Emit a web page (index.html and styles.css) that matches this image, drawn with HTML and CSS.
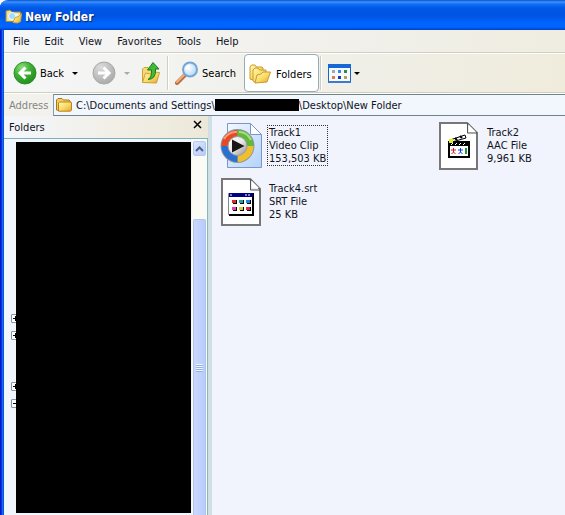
FILE: index.html
```html
<!DOCTYPE html>
<html lang="en">
<head>
<meta charset="utf-8">
<title>New Folder</title>
<link rel="stylesheet" href="styles.css">
</head>
<body>
<svg width="0" height="0" class="defs" aria-hidden="true">
  <defs>
    <linearGradient id="gold" x1="0" y1="0" x2="1" y2="1"><stop offset="0" stop-color="#fff9b8"/><stop offset=".5" stop-color="#fbdc68"/><stop offset="1" stop-color="#e3a62d"/></linearGradient>
    <radialGradient id="green" cx=".35" cy=".25" r=".8"><stop offset="0" stop-color="#8ce07a"/><stop offset=".5" stop-color="#3fae35"/><stop offset="1" stop-color="#1d8d1b"/></radialGradient>
    <radialGradient id="grey" cx=".35" cy=".25" r=".8"><stop offset="0" stop-color="#dcdcdc"/><stop offset="1" stop-color="#a9a9a9"/></radialGradient>
    <radialGradient id="glass" cx=".4" cy=".4" r=".7"><stop offset="0" stop-color="#ffffff"/><stop offset="1" stop-color="#a5d3f7"/></radialGradient>
    <linearGradient id="sheet" x1="0" y1="0" x2="1" y2="1"><stop offset="0" stop-color="#f2f8ff"/><stop offset="1" stop-color="#b4d2fa"/></linearGradient>
    <linearGradient id="disc" x1="0" y1="0" x2="1" y2="1"><stop offset="0" stop-color="#ffffff"/><stop offset=".5" stop-color="#e8e8e8"/><stop offset="1" stop-color="#8b8b8b"/></linearGradient>
    <symbol id="folder" viewBox="0 0 16 14">
      <path d="M.5 12V2L2 .5h4L7.500 2H13l1 1v9.500H2z" fill="#f4cd5e" stroke="#a87918"/>
      <path d="M2.500 13.200V5l1-1H15l.5 1v7l-1 1.200z" fill="url(#gold)" stroke="#b8851e"/>
    </symbol>
  </defs>
</svg>
<div class="window">
  <header class="titlebar">
    <svg class="title-icon" width="17" height="15" viewBox="0 0 17 15" aria-hidden="true">
      <path d="M1 12.500V2l4-1 2 2h8.500v9.500z" fill="#f5df8e" stroke="#9b8549"/>
      <path d="M4 4.500h9V11H4z" fill="#eaf6fb"/>
      <circle cx="7" cy="7" r="3.500" fill="#a5dcf7" stroke="#edfaff"/>
      <path d="m8 13.500 2-5 4-1 2.500-3-1 8-3 1.500z" fill="url(#gold)" stroke="#c5a33e"/>
    </svg>
    <h1>New Folder</h1>
  </header>
  <nav class="menubar" aria-label="Menu">
    <button type="button">File</button><button type="button">Edit</button><button type="button">View</button><button type="button">Favorites</button><button type="button">Tools</button><button type="button">Help</button>
  </nav>
  <div class="toolbar" role="toolbar" aria-label="Standard buttons">
    <button class="tool back" type="button">
      <svg width="24" height="24" viewBox="0 0 24 24" aria-hidden="true"><circle cx="12" cy="12" r="11" fill="url(#green)" stroke="#2f8f2b"/><path d="M18 12H7m5.500-5.500L7 12l5.500 5.500" fill="none" stroke="#fff" stroke-width="3"/></svg>
      <span>Back</span>
      <i class="caret"></i>
    </button>
    <button class="tool forward" type="button" aria-label="Forward" disabled>
      <svg width="24" height="24" viewBox="0 0 24 24" aria-hidden="true"><circle cx="12" cy="12" r="11" fill="url(#grey)" stroke="#a9a9a9"/><path d="M6 12h11m-5.500-5.500L17 12l-5.500 5.500" fill="none" stroke="#fff" stroke-width="3"/></svg>
      <i class="caret"></i>
    </button>
    <button class="tool" type="button" aria-label="Up">
      <svg width="20" height="24" viewBox="0 0 20 24" aria-hidden="true">
        <path d="M1.500 21V8L3 6.500h4L8 8h6v13z" fill="#f7d976" stroke="#d0a23c"/>
        <path d="m1.500 21.500 3-9.500 5 1 2-2 7 .5-3 10.500z" fill="url(#gold)" stroke="#d0a03a"/>
        <path d="M7 18.500q4-2 3.500-9.500H6.500L12 1.500 18 8h-3.500q1 10-7.500 10.500z" fill="#42b938" stroke="#1c7b1b"/>
      </svg>
    </button>
    <span class="divider"></span>
    <button class="tool search" type="button">
      <svg width="24" height="24" viewBox="0 0 24 24" aria-hidden="true"><path d="m2 22 8-8" stroke="#b66e46" stroke-width="4" stroke-linecap="round"/><path d="m2 21 7-7" stroke="#f5ad79" stroke-width="2" stroke-linecap="round"/><circle cx="15" cy="8.500" r="7" fill="url(#glass)" stroke="#78a5d6" stroke-width="2"/><path d="M11 8q1-3 4-3" fill="none" stroke="#fff" stroke-width="2"/></svg>
      <span>Search</span>
    </button>
    <button class="tool pressed" type="button" aria-pressed="true">
      <svg width="22" height="20" viewBox="0 0 22 20" aria-hidden="true">
        <path d="M1 15V3l1.500-2H6l1.500 2H13l1 1v4L4 16z" fill="url(#gold)" stroke="#c99a2c"/>
        <path d="M4 17V6l2-2h3l1.500 2H17v5L7 19z" fill="url(#gold)" stroke="#c99a2c"/>
        <path d="m6 19 2-8 4-1 2-2h7.500L18 18z" fill="url(#gold)" stroke="#c99a2c"/>
      </svg>
      <span>Folders</span>
    </button>
    <span class="divider"></span>
    <button class="tool views" type="button" aria-label="Views">
      <svg width="23" height="19" viewBox="0 0 23 19" aria-hidden="true"><path d="M.5.5h22v18H.5z" fill="#f6faff" stroke="#1c65c5"/><path d="M0 0h23v4H0z" fill="#1767d5"/><path d="M0 17h23v2H0z" fill="#3a7bcf"/><path d="M4 6h3v3H4z" fill="#9ba7c7"/><path d="M10 6h3v3h-3z" fill="#3c86df"/><path d="M16 6h3v3h-3z" fill="#249444"/><path d="M4 12h3v3H4z" fill="#e77945"/><path d="M10 12h3v3h-3z" fill="#143cb7"/><path d="M16 12h3v3h-3z" fill="#b5a152"/></svg>
      <i class="caret"></i>
    </button>
  </div>
  <div class="address">
    <span class="address-label">Address</span>
    <div class="address-box">
      <svg width="16" height="14" aria-hidden="true"><use href="#folder"/></svg>
      <span class="path">C:\Documents and Settings\</span><span class="masked"></span><span class="path">\Desktop\New Folder</span>
    </div>
  </div>
  <div class="body">
    <aside class="sidebar">
      <div class="side-head">
        <h2>Folders</h2>
        <button type="button" aria-label="Close"><svg width="9" height="9" viewBox="0 0 9 9" aria-hidden="true"><path d="m1 1 7 7M8 1 1 8" stroke="#000" stroke-width="1.500"/></svg></button>
      </div>
      <div class="side-body">
        <div class="toggles">
          <button class="toggle row-11" type="button" aria-label="Expand"></button>
          <button class="toggle row-12" type="button" aria-label="Expand"></button>
          <button class="toggle row-15" type="button" aria-label="Expand"></button>
          <button class="toggle open row-16" type="button" aria-label="Collapse"></button>
        </div>
        <div class="tree-mask"></div>
        <div class="scrollbar">
          <button type="button" aria-label="Scroll up"><svg width="9" height="6" viewBox="0 0 9 6" aria-hidden="true"><path d="m1 5 3.500-3.500L8 5" fill="none" stroke="#4d6185" stroke-width="2"/></svg></button>
          <div class="thumb"><span class="grip"></span></div>
        </div>
      </div>
    </aside>
    <main class="files">
      <article class="file">
        <svg width="42" height="48" viewBox="0 0 42 48" aria-hidden="true">
          <path d="M7.500 1.500h23l11 11v33h-34z" fill="url(#sheet)" stroke="#7898cd"/>
          <path d="M30.500 1.500v11h11z" fill="#fff" stroke="#7898cd"/>
          <circle cx="17.500" cy="24" r="17" fill="#8b97a4"/>
          <path d="M17.500 24V8A16 16 0 0 0 1.500 24z" fill="#e64a24"/><path d="M17.500 24V8a16 16 0 0 1 16 16z" fill="#61b938"/><path d="M17.500 24v16a16 16 0 0 0 16-16z" fill="#f0c02c"/><path d="M17.500 24v16a16 16 0 0 1-16-16z" fill="#2b70cf"/>
          <path d="M4 17q5-8 13-7" fill="none" stroke="#ff9770" stroke-width="2"/><path d="M19 10q8 0 12 8" fill="none" stroke="#a7df7a" stroke-width="2"/>
          <circle cx="17.500" cy="24" r="9.500" fill="url(#disc)" stroke="#99a" />
          <path d="m12 17.500 12.500 6.500L12 30.500z" fill="#171717"/>
        </svg>
        <div class="info focused"><span>Track1</span><span>Video Clip</span><span>153,503 KB</span></div>
      </article>
      <article class="file">
        <svg width="42" height="48" viewBox="0 0 42 48" aria-hidden="true">
          <path d="M2 1h27l10 10v36H2z" fill="#fff" stroke="#777" stroke-width="2"/>
          <path d="M29.500 1v10H39z" fill="#e9edf2" stroke="#555"/>
          <path d="M31 3v7h7z" fill="#fff"/>
          <path d="M11 20h20v15H11z" fill="#fff" stroke="#000" stroke-width="2"/>
          <path d="M10 19h22v5H10z"/><path d="m13 23 2-2m2 2 2-2m2 2 2-2m2 2 2-2" stroke="#fff"/>
          <path d="m12 18 15-5 1 3-14 4z" fill="#fff" stroke="#000"/><path d="m17 16 2 2m3-4 2 2" stroke="#000" stroke-width="2"/>
          <path d="M11 17h4v4h-4z" fill="#e5ed22"/>
          <path d="M13 28h5m-2.500-2v4l-2 2m2-2 2 2" stroke="#e21818" fill="none"/><path d="M20 28h5m-2.500-2v4l-2 2m2-2 2 2" stroke="#1837de" fill="none"/><path d="M28 26v6" stroke="#1c9835" stroke-width="2"/>
        </svg>
        <div class="info"><span>Track2</span><span>AAC File</span><span>9,961 KB</span></div>
      </article>
      <article class="file">
        <svg width="42" height="48" viewBox="0 0 42 48" aria-hidden="true">
          <path d="M2 1h28l10 10v36H2z" fill="#fff" stroke="#777" stroke-width="2"/>
          <path d="M30.500 1v11H40z" fill="#e9edf2" stroke="#555"/><path d="M32 3v7h7z" fill="#fff"/>
          <path d="M8.500 15.500h24v21h-24z" fill="#fff" stroke="#888"/><path d="M33 15v22H9" fill="none" stroke="#000" stroke-width="2"/>
          <path d="M9 15h24v4H9z" fill="#000085"/><path d="M10 17h2m13 0h2m1 0h2" stroke="#fff"/>
          <path d="M13 22h4v4h-4zm7 0h4v4h-4zm7 0h4v4h-4zM13 29h4v4h-4zm7 0h4v4h-4zm7 0h4v4h-4z"/>
          <path d="M12 22h4v3h-4z" fill="#e22626"/><path d="M19 22h4v3h-4z" fill="#16a8a8"/><path d="M26 22h4v3h-4z" fill="#1b87e2"/><path d="M12 29h4v3h-4z" fill="#df43b1"/><path d="M19 29h4v3h-4z" fill="#e2c72d"/><path d="M26 29h4v3h-4z" fill="#d92b45"/>
        </svg>
        <div class="info"><span>Track4.srt</span><span>SRT File</span><span>25 KB</span></div>
      </article>
    </main>
  </div>
</div>
</body>
</html>
```
FILE: styles.css
```css
* { box-sizing: border-box; }

body {
  margin: 0;
  background: #fff;
  color: #10131c;
  font: 11px/13px Tahoma, "DejaVu Sans Condensed", "DejaVu Sans", sans-serif;
}

button {
  margin: 0;
  padding: 0;
  border: 0;
  background: none;
  color: inherit;
  font: inherit;
}

h1, h2 { margin: 0; font-size: 11px; font-weight: normal; }
svg { display: block; flex: none; }
.defs { position: absolute; }

.window {
  display: flex;
  flex-direction: column;
  min-height: 100vh;
  padding-left: 4px;
  border-top-left-radius: 8px;
  background: linear-gradient(90deg, #0019cf 0 1px, #0831d9 1px 2px, #166aee 2px 3px, #0855dd 3px 4px, #f1f4fd 4px);
}

.titlebar {
  display: flex;
  align-items: center;
  gap: 3px;
  height: 30px;
  margin-left: -4px;
  padding: 3px 5px 0;
  border-top-left-radius: 8px;
  background: linear-gradient(#0b50d0 0, #3c92ff 2px, #1270f5 4px, #0058e6 8px, #0054e3 16px, #0064ff 23px, #0065ff 27px, #0040c5 30px);
  color: #fff;
}

.titlebar h1 {
  font-size: 12px;
  font-weight: bold;
  line-height: 16px;
  text-shadow: 1px 1px 1px #0a246a;
}

.menubar {
  display: flex;
  gap: 15px;
  height: 23px;
  padding: 0 9px;
  border-bottom: 1px solid #d0cec0;
  background: linear-gradient(90deg, #f5f6f7, #f1f0eb 60%, #efede0);
}

.toolbar {
  display: flex;
  align-items: center;
  height: 40px;
  padding: 0 9px;
  border-top: 1px solid #fff;
  border-bottom: 1px solid #d2cebc;
  background: linear-gradient(90deg, #f5f6f7, #f0efe8 60%, #efecdc);
  color: #000;
}

.tool { display: flex; align-items: center; gap: 3px; flex: none; }
.back { margin-right: 14px; }
.back .caret { margin-left: 5px; }
.forward { margin-right: 11px; }
.forward .caret { margin-left: 5px; opacity: .3; }
.search { margin-right: 8px; }

.caret {
  border: 3px solid transparent;
  border-top-color: #000;
  border-bottom: 0;
}

.divider {
  width: 2px;
  height: 34px;
  margin: 0 6px;
  border-left: 1px solid #d0cfc4;
  border-right: 1px solid #fff;
}

.pressed {
  height: 38px;
  padding: 2px 6px 0 4px;
  gap: 5px;
  border: 1px solid #98acb8;
  border-radius: 4px;
  background: #fff;
}

.pressed + .divider { margin-left: 1px; }

.address {
  display: flex;
  align-items: center;
  height: 23px;
  border-top: 1px solid #fff;
  background: #f2f1ec;
}

.address-label { width: 49px; padding-left: 5px; color: #858585; }

.address-box {
  display: flex;
  flex: 1;
  align-items: center;
  height: 22px;
  padding-left: 2px;
  border: 1px solid #7f9db9;
  border-color: #71838b #7f9db9;
  border-right: 0;
  background: #f2f6fd;
  white-space: nowrap;
}

.address-box svg { margin-right: 4px; }
.masked { width: 84px; height: 12px; background: #000; }

.body { display: flex; flex: 1; }

.sidebar {
  display: flex;
  flex-direction: column;
  flex: none;
  width: 208px;
  border-right: 4px solid #cfe0e5;
  background: #f1f5fc;
}

.side-head {
  display: flex;
  justify-content: space-between;
  align-items: center;
  height: 23px;
  padding: 1px 6px 0 5px;
  border-bottom: 1px solid #7eb0b9;
  background: linear-gradient(90deg, #f3f6fb, #f1eee5 60%, #ece8d9);
}

.side-head button { padding-bottom: 6px; }
.side-body { display: flex; flex: 1; }

.toggles {
  display: grid;
  grid-template-rows: repeat(16, 17px);
  align-items: center;
  width: 12px;
  padding: 1px 0 0 7px;
  overflow: hidden;
}

.toggle {
  width: 9px;
  height: 9px;
  border: 1px solid #8794a5;
  border-radius: 1px;
  background:
    linear-gradient(#000, #000) center / 5px 1px no-repeat,
    linear-gradient(#000, #000) center / 1px 5px no-repeat,
    #fff;
}

.toggle.open { background: linear-gradient(#000, #000) center / 5px 1px no-repeat, #fff; }
.row-11 { grid-row: 11; }
.row-12 { grid-row: 12; }
.row-15 { grid-row: 15; }
.row-16 { grid-row: 16; }

.tree-mask { flex: 1; margin: 3px 1px 2px 0; background: #000; }

.scrollbar {
  display: flex;
  flex-direction: column;
  gap: 63px;
  width: 16px;
  padding: 2px 1px 0;
  border-right: 1px solid #86b8bc;
  background: #fbfbf6;
}

.scrollbar button {
  display: flex;
  align-items: center;
  justify-content: center;
  height: 15px;
  border: 1px solid #b5c8f5;
  border-radius: 2px;
  background: linear-gradient(135deg, #dce6ff, #b7cafa);
}

.thumb {
  display: grid;
  flex: 1;
  place-items: center;
  border: 1px solid #b1c4ee;
  border-bottom: 0;
  border-radius: 2px 2px 0 0;
  background: linear-gradient(90deg, #cad8ff, #bacbfa);
}

.grip {
  width: 7px;
  height: 8px;
  background: repeating-linear-gradient(#eef4ff 0 1px, #96b0ec 1px 2px);
}

.files {
  display: grid;
  flex: 1;
  grid-template-columns: 218px 1fr;
  grid-auto-rows: 48px;
  align-content: start;
  row-gap: 8px;
  padding: 6px 8px;
  background: #f1f4fd;
}

.file { display: flex; align-items: flex-start; gap: 5px; white-space: nowrap; }

.info {
  margin-top: 3px;
  padding: 0 1px;
  border: 1px dotted transparent;
}

.info span { display: block; }
.focused { border-color: #333; }
```
